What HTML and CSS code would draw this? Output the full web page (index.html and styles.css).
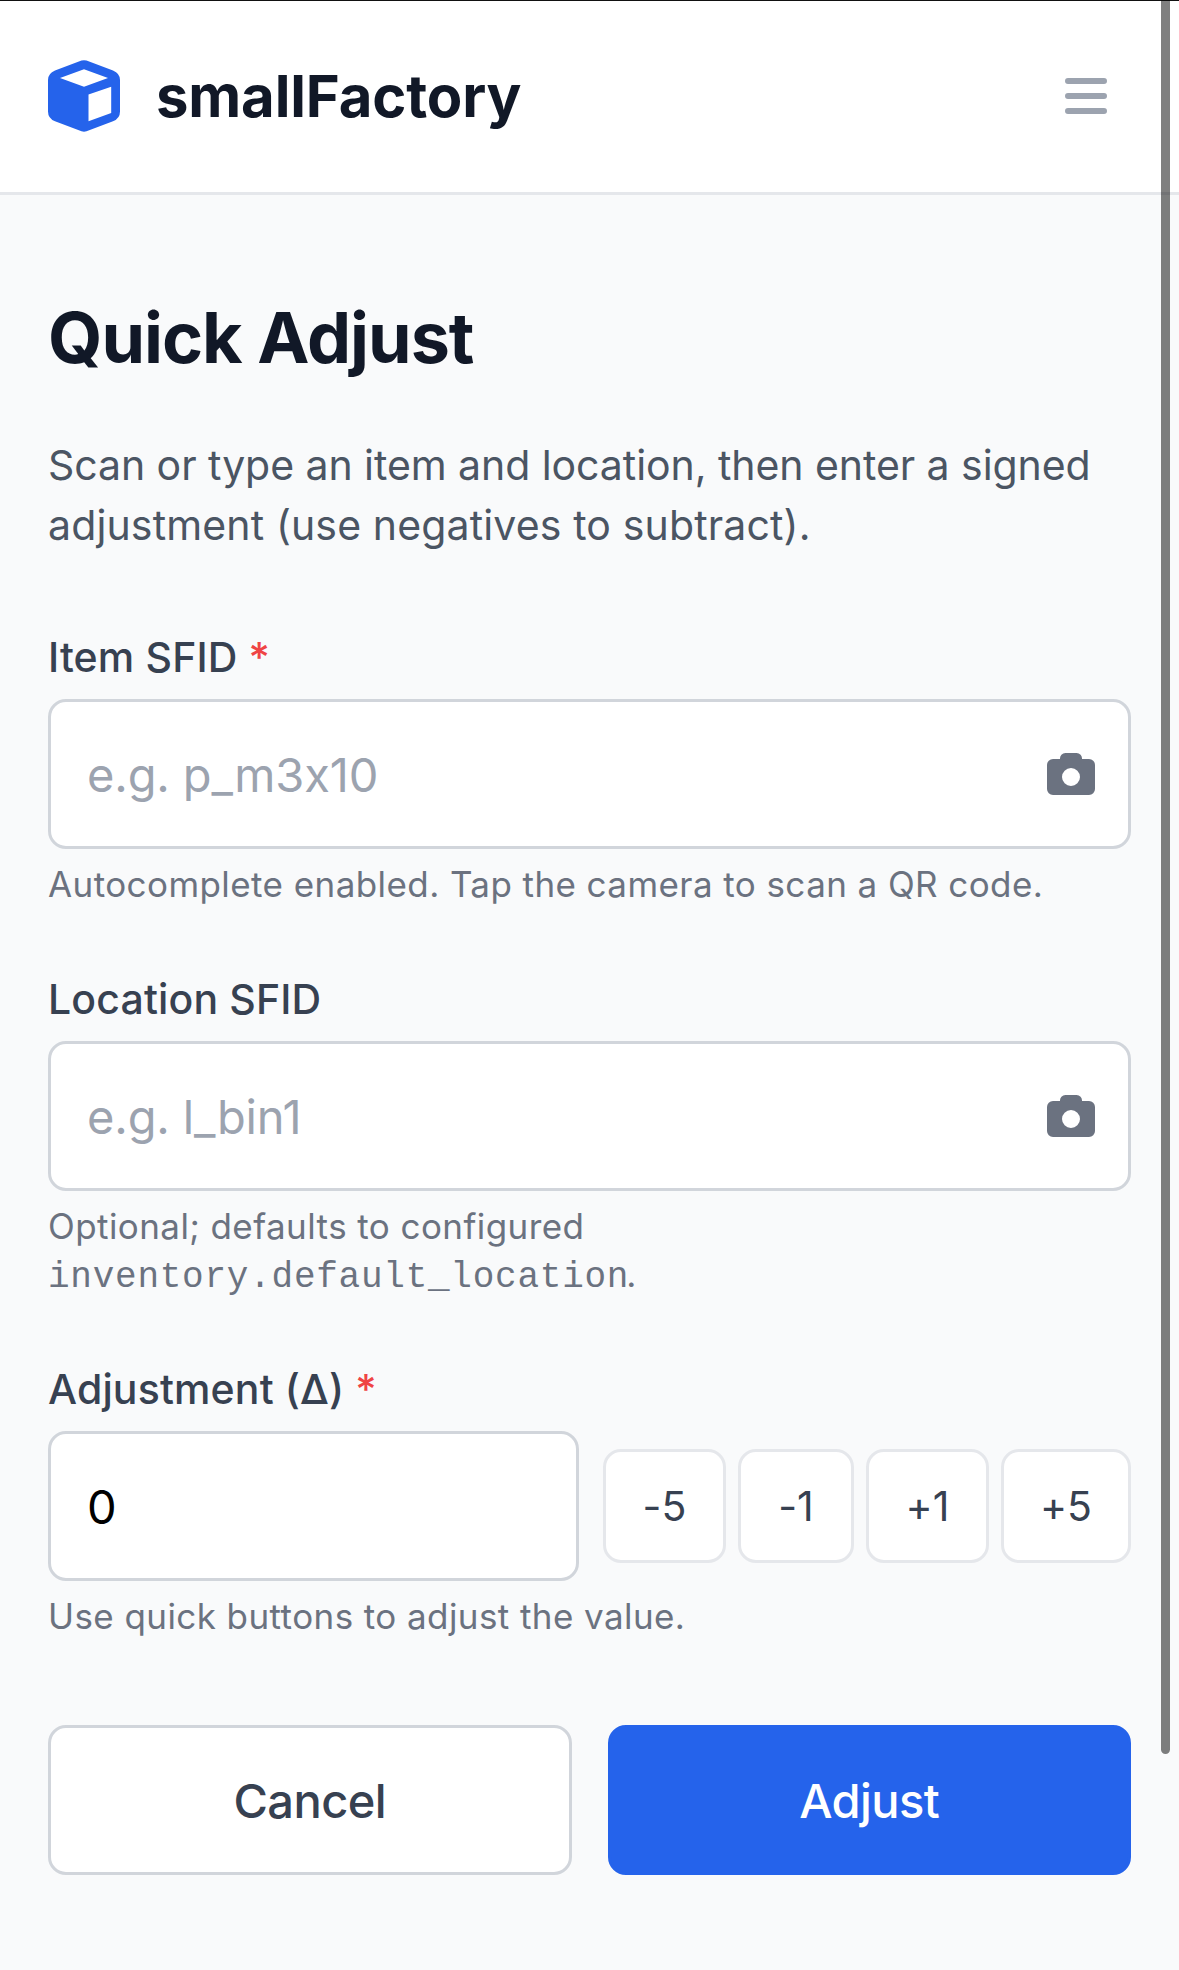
FILE: index.html
```html
<!DOCTYPE html>
<html lang="en">
<head>
<meta charset="utf-8">
<title>smallFactory – Quick Adjust</title>
<link rel="stylesheet" href="styles.css">
</head>
<body>
<header class="topbar">
  <a class="brand">
    <svg class="brand-icon" width="72" height="72" viewBox="0 0 72 72">
      <path fill="#2563eb" fill-rule="evenodd" d="M33.5.6q2.5-.9 5 0L65 10.4Q72 13.200 72 20V51.500Q72 58.500 65 61.300L38.500 71.300q-2.500.9-5 0L7 61.300Q0 58.500 0 51.500V20Q0 13.200 7 10.400ZM36 9.200 12 18l24 8.700L60 18ZM40.500 34.600v26.600L63.200 53V26.700Z"/>
    </svg>
    <span class="brand-name">smallFactory</span>
  </a>
  <svg class="menu-icon" width="42" height="36" viewBox="0 0 42 36">
    <path stroke="#9ca3af" stroke-width="6" stroke-linecap="round" d="M3 3h36M3 18h36M3 33h36"/>
  </svg>
</header>
<main class="page">
  <h1 class="title">Quick Adjust</h1>
  <p class="intro">Scan or type an item and location, then enter a signed<br><span class="intro-end">adjustment (use negatives to subtract).</span></p>
  <form>
    <div class="field">
      <label class="label" for="item">Item SFID <span class="required">*</span></label>
      <div class="control">
        <input class="input" id="item" type="text" placeholder="e.g. p_m3x10">
        <svg class="camera" width="48" height="42" viewBox="0 0 48 42"><path fill="#6b7280" fill-rule="evenodd" d="M6 6h7A5.500 5.500 0 0 1 18.500 0h11A5.500 5.500 0 0 1 35 6h7a6 6 0 0 1 6 6v24a6 6 0 0 1-6 6H6a6 6 0 0 1-6-6V12a6 6 0 0 1 6-6ZM24 15a9 9 0 1 0 0 18a9 9 0 0 0 0-18Z"/></svg>
      </div>
      <p class="help">Autocomplete enabled. Tap the camera to scan a QR code.</p>
    </div>
    <div class="field">
      <label class="label" for="location">Location SFID</label>
      <div class="control">
        <input class="input" id="location" type="text" placeholder="e.g. l_bin1">
        <svg class="camera" width="48" height="42" viewBox="0 0 48 42"><path fill="#6b7280" fill-rule="evenodd" d="M6 6h7A5.500 5.500 0 0 1 18.500 0h11A5.500 5.500 0 0 1 35 6h7a6 6 0 0 1 6 6v24a6 6 0 0 1-6 6H6a6 6 0 0 1-6-6V12a6 6 0 0 1 6-6ZM24 15a9 9 0 1 0 0 18a9 9 0 0 0 0-18Z"/></svg>
      </div>
      <p class="help">Optional; defaults to configured<br><code class="code">inventory.default_location</code>.</p>
    </div>
    <div class="field">
      <label class="label" for="delta">Adjustment (Δ) <span class="required">*</span></label>
      <div class="adjust-row">
        <div class="control"><input class="input" id="delta" type="text" value="0"></div>
        <div class="quick">
          <button class="step step-minus-five" type="button">-5</button>
          <button class="step step-minus-one" type="button">-1</button>
          <button class="step step-plus-one" type="button">+1</button>
          <button class="step step-plus-five" type="button">+5</button>
        </div>
      </div>
      <p class="help">Use quick buttons to adjust the value.</p>
    </div>
    <div class="actions">
      <button class="button" type="button">Cancel</button>
      <button class="button button-primary" type="button">Adjust</button>
    </div>
  </form>
</main>
<div class="scrollbar"></div>
</body>
</html>
```
FILE: styles.css
```css
* { box-sizing: border-box; margin: 0; }

body {
  min-height: 1970px;
  background: #f9fafb;
  color: #111827;
  font-family: Inter, "Liberation Sans", sans-serif;
  font-feature-settings: "calt" 0;
  overflow: hidden;
}

input, button { font-family: inherit; font-feature-settings: inherit; }

.topbar {
  display: flex;
  align-items: center;
  justify-content: space-between;
  height: 195px;
  padding: 0 72px 0 48px;
  background: #fff;
  border-bottom: 3px solid #e5e7eb;
  box-shadow: inset 0 1px #111;
}

.brand { display: flex; align-items: center; gap: 36px; }
.brand-icon, .menu-icon, .camera { display: block; fill: none; }
.brand-name { font-size: 58px; font-weight: 700; line-height: 84px; letter-spacing: -.15px; }

.page { padding: 95px 48px 0; }

.title { font-size: 70px; font-weight: 700; line-height: 96px; letter-spacing: -1px; }

.intro {
  margin-top: 49px;
  color: #4b5563;
  font-size: 41px;
  line-height: 60px;
  letter-spacing: -.06px;
  white-space: nowrap;
}
.intro-end { letter-spacing: .14px; }

.field { margin-bottom: 60px; }
.intro + form { margin-top: 72px; }

.label {
  display: block;
  color: #374151;
  font-size: 41px;
  font-weight: 500;
  line-height: 60px;
  letter-spacing: .15px;
}
.required { color: #ef4444; }

.control {
  display: flex;
  align-items: center;
  height: 150px;
  padding: 0 33px 0 36px;
  background: #fff;
  border: 3px solid #d1d5db;
  border-radius: 18px;
}
.label + * { margin-top: 12px; }

.input {
  flex: 1;
  min-width: 0;
  height: 72px;
  padding: 0;
  border: 0;
  outline: 0;
  background: transparent;
  color: #000;
  font-size: 47px;
  letter-spacing: -.15px;
}
.input::placeholder { color: #9ca3af; opacity: 1; }

.help {
  padding: 11px 0 1px;
  color: #6b7280;
  font-size: 35px;
  line-height: 48px;
  letter-spacing: .42px;
  white-space: nowrap;
}
.code { margin-right: -3px; font-family: "Liberation Mono", monospace; font-size: 36px; letter-spacing: .75px; line-height: 1; }

.adjust-row { display: flex; align-items: center; gap: 24px; }
.adjust-row .control { flex: 1; min-width: 0; }

.quick { display: flex; gap: 12px; }
.step {
  height: 114px;
  padding: 0;
  background: #fff;
  border: 3px solid #e5e7eb;
  border-radius: 18px;
  color: #374151;
  font-size: 41px;
}
.step-minus-five { width: 123px; }
.step-minus-one { width: 116px; }
.step-plus-one { width: 123px; }
.step-plus-five { width: 130px; }

.actions { display: grid; grid-template-columns: 1fr 1fr; gap: 36px; margin-top: 84px; }
.button {
  height: 150px;
  background: #fff;
  border: 3px solid #d1d5db;
  border-radius: 18px;
  color: #374151;
  font-size: 47px;
  font-weight: 500;
  letter-spacing: -.55px;
}
.button-primary { background: #2563eb; border-color: #2563eb; color: #fff; }

/* overlay scroll indicator */
.scrollbar {
  position: absolute;
  top: 0;
  right: 9px;
  width: 9px;
  height: 1754px;
  border-radius: 0 0 5px 5px;
  background: rgba(0, 0, 0, .5);
}
```
